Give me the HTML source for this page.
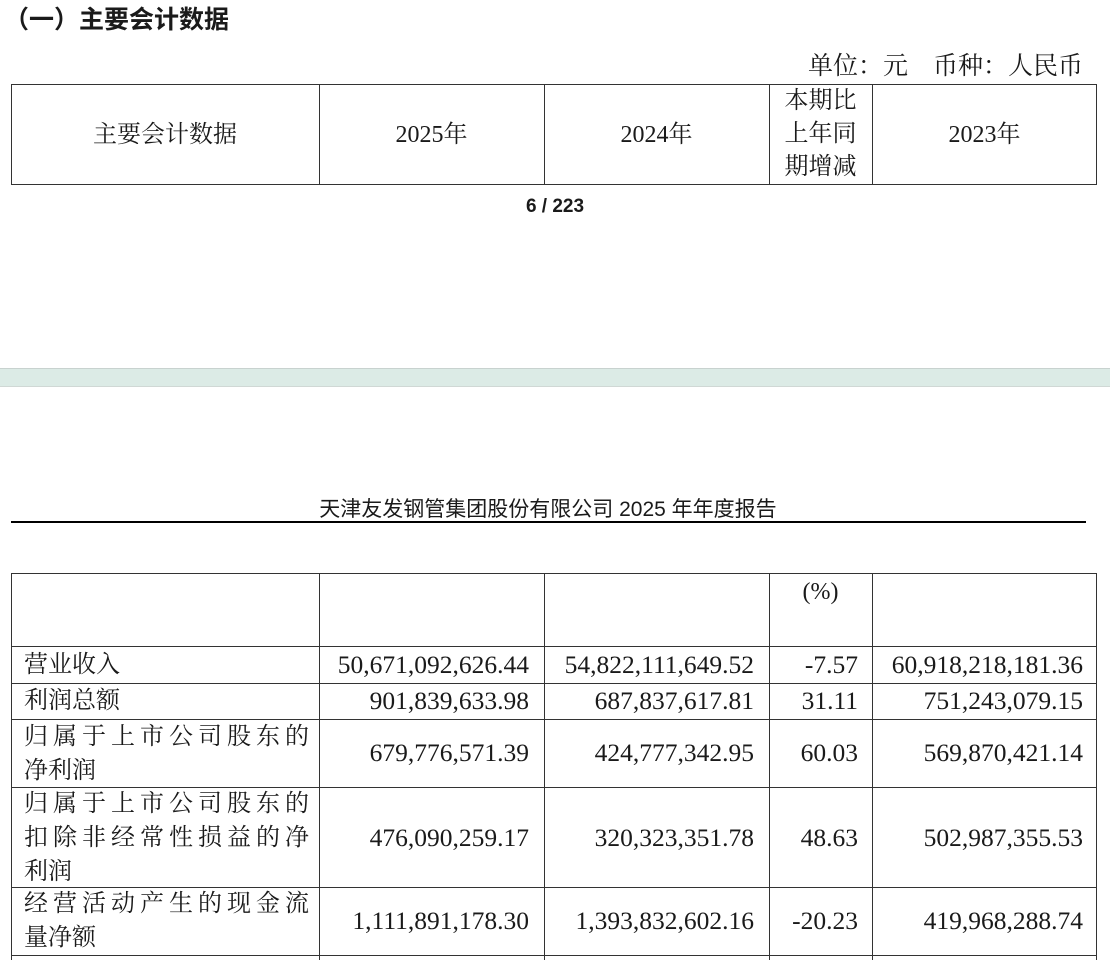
<!DOCTYPE html>
<html><head><meta charset="utf-8"><style>
body{margin:0;width:1110px;height:960px;overflow:hidden;background:#fff;position:relative;font-family:"Liberation Serif","Noto Serif CJK SC",serif;color:#1a1a1a}
.a{position:absolute;white-space:nowrap}
.t{font-size:24px;line-height:34px}
.n{font-size:25.5px}
.r{text-align:right}
.sp{letter-spacing:5px}
</style></head><body>
<div class="a" style="left:4px;top:0px;font-size:25px;font-family:'Liberation Sans','Noto Sans CJK SC',sans-serif;font-weight:bold;">（一）主要会计数据</div>
<div class="a t" style="left:808px;top:50px;font-size:25px;">单位：元　币种：人民币</div>
<!-- table 1 -->
<div class="a" style="left:11px;top:84px;width:1086px;height:101px;border:1px solid #333;box-sizing:border-box"></div>
<div class="a" style="left:319px;top:84px;width:1px;height:100px;background:#333"></div>
<div class="a" style="left:544px;top:84px;width:1px;height:100px;background:#333"></div>
<div class="a" style="left:769px;top:84px;width:1px;height:100px;background:#333"></div>
<div class="a" style="left:872px;top:84px;width:1px;height:100px;background:#333"></div>
<div class="a t" style="left:11px;top:118px;width:308px;text-align:center">主要会计数据</div>
<div class="a t" style="left:319px;top:118px;width:225px;text-align:center">2025年</div>
<div class="a t" style="left:544px;top:118px;width:225px;text-align:center">2024年</div>
<div class="a t" style="left:769px;top:85px;width:103px;text-align:center;line-height:33px">本期比<br>上年同<br>期增减</div>
<div class="a t" style="left:872px;top:118px;width:225px;text-align:center">2023年</div>
<div class="a" style="left:0;top:196px;width:1110px;text-align:center;font-family:'Liberation Sans',sans-serif;font-weight:bold;font-size:19px">6 / 223</div>
<!-- band -->
<div class="a" style="left:0;top:368px;width:1110px;height:19px;background:#dcebe6;border-top:1px solid #c8d2cf;border-bottom:1px solid #d0d8d5;box-sizing:border-box"></div>
<div class="a" style="left:0;top:493px;width:1096px;text-align:center;font-size:21px;font-family:'Liberation Sans','Noto Sans CJK SC',sans-serif">天津友发钢管集团股份有限公司 2025 年年度报告</div>
<div class="a" style="left:11px;top:521px;width:1075px;height:2px;background:#000"></div>
<!-- table 2 -->
<div class="a" style="left:11px;top:573px;width:1px;height:387px;background:#333"></div>
<div class="a" style="left:319px;top:573px;width:1px;height:387px;background:#333"></div>
<div class="a" style="left:544px;top:573px;width:1px;height:387px;background:#333"></div>
<div class="a" style="left:769px;top:573px;width:1px;height:387px;background:#333"></div>
<div class="a" style="left:872px;top:573px;width:1px;height:387px;background:#333"></div>
<div class="a" style="left:1096px;top:573px;width:1px;height:387px;background:#333"></div>
<div class="a" style="left:11px;top:573px;width:1086px;height:1px;background:#333"></div>
<div class="a" style="left:11px;top:646px;width:1086px;height:1px;background:#333"></div>
<div class="a" style="left:11px;top:683px;width:1086px;height:1px;background:#333"></div>
<div class="a" style="left:11px;top:719px;width:1086px;height:1px;background:#333"></div>
<div class="a" style="left:11px;top:787px;width:1086px;height:1px;background:#333"></div>
<div class="a" style="left:11px;top:887px;width:1086px;height:1px;background:#333"></div>
<div class="a" style="left:11px;top:955px;width:1086px;height:1px;background:#333"></div>
<div class="a t" style="left:769px;top:575px;width:103px;text-align:center">(%)</div>

<div class="a t" style="left:24px;top:648px">营业收入</div>
<div class="a t" style="left:24px;top:684px">利润总额</div>
<div class="a t" style="left:24px;top:720px"><span class="sp">归属于上市公司股东的</span><br>净利润</div>
<div class="a t" style="left:24px;top:787px"><span class="sp">归属于上市公司股东的</span><br><span class="sp">扣除非经常性损益的净</span><br>利润</div>
<div class="a t" style="left:24px;top:887px"><span class="sp">经营活动产生的现金流</span><br>量净额</div>

<div class="a t n r" style="left:320px;width:209px;top:648px">50,671,092,626.44</div>
<div class="a t n r" style="left:545px;width:209px;top:648px">54,822,111,649.52</div>
<div class="a t n r" style="left:770px;width:88px;top:648px">-7.57</div>
<div class="a t n r" style="left:873px;width:210px;top:648px">60,918,218,181.36</div>

<div class="a t n r" style="left:320px;width:209px;top:684px">901,839,633.98</div>
<div class="a t n r" style="left:545px;width:209px;top:684px">687,837,617.81</div>
<div class="a t n r" style="left:770px;width:88px;top:684px">31.11</div>
<div class="a t n r" style="left:873px;width:210px;top:684px">751,243,079.15</div>

<div class="a t n r" style="left:320px;width:209px;top:736px">679,776,571.39</div>
<div class="a t n r" style="left:545px;width:209px;top:736px">424,777,342.95</div>
<div class="a t n r" style="left:770px;width:88px;top:736px">60.03</div>
<div class="a t n r" style="left:873px;width:210px;top:736px">569,870,421.14</div>

<div class="a t n r" style="left:320px;width:209px;top:821px">476,090,259.17</div>
<div class="a t n r" style="left:545px;width:209px;top:821px">320,323,351.78</div>
<div class="a t n r" style="left:770px;width:88px;top:821px">48.63</div>
<div class="a t n r" style="left:873px;width:210px;top:821px">502,987,355.53</div>

<div class="a t n r" style="left:320px;width:209px;top:904px">1,111,891,178.30</div>
<div class="a t n r" style="left:545px;width:209px;top:904px">1,393,832,602.16</div>
<div class="a t n r" style="left:770px;width:88px;top:904px">-20.23</div>
<div class="a t n r" style="left:873px;width:210px;top:904px">419,968,288.74</div>
</body></html>
